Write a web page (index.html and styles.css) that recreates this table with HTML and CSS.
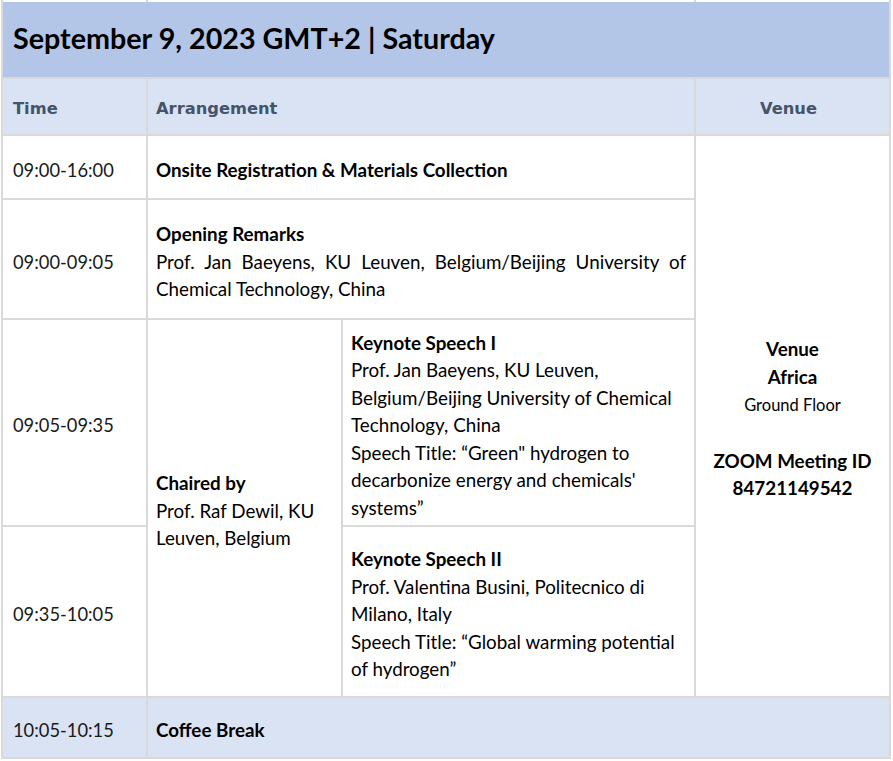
FILE: index.html
```html
<!DOCTYPE html>
<html lang="en">
<head>
<meta charset="utf-8">
<title>September 9, 2023 Schedule</title>
<link rel="stylesheet" href="styles.css">
</head>
<body>
<div class="cut"><span></span><span class="cut-wide"></span><span></span></div>
<div class="sched">
  <div class="title">September 9, 2023 GMT+2 | Saturday</div>

  <div class="hd">Time</div>
  <div class="hd span-arr">Arrangement</div>
  <div class="hd hd-venue">Venue</div>

  <div class="time">09:00-16:00</div>
  <div class="cell span-arr"><p><b>Onsite Registration &amp; Materials Collection</b></p></div>
  <div class="cell venue">
    <p><b>Venue</b><br><b>Africa</b><br><span class="small">Ground Floor</span><br><br><b>ZOOM Meeting ID</b><br><b>84721149542</b></p>
  </div>

  <div class="time">09:00-09:05</div>
  <div class="cell span-arr"><p class="just"><b>Opening Remarks</b><br>Prof. Jan Baeyens, KU Leuven, Belgium/Beijing University of Chemical Technology, China</p></div>

  <div class="time">09:05-09:35</div>
  <div class="cell chair"><p><b>Chaired by</b><br>Prof. Raf Dewil, KU<br>Leuven, Belgium</p></div>
  <div class="cell key"><p><b>Keynote Speech I</b><br>Prof. Jan Baeyens, KU Leuven,<br>Belgium/Beijing University of Chemical<br>Technology, China<br>Speech Title: “Green" hydrogen to<br>decarbonize energy and chemicals'<br>systems”</p></div>

  <div class="time">09:35-10:05</div>
  <div class="cell key"><p><b>Keynote Speech II</b><br>Prof. Valentina Busini, Politecnico di<br>Milano, Italy<br>Speech Title: “Global warming potential<br>of hydrogen”</p></div>

  <div class="time brk">10:05-10:15</div>
  <div class="cell brk span-rest"><p><b>Coffee Break</b></p></div>
</div>
</body>
</html>
```
FILE: styles.css
```css
html, body {
  margin: 0;
  padding: 0;
  background: #ffffff;
}

body {
  font-family: "Lato", "Liberation Sans", sans-serif;
  color: #000000;
}

.cut {
  display: grid;
  grid-template-columns: 143px 546px 193px;
  column-gap: 2px;
  height: 2px;
  padding: 0 2px;
  margin-left: 1px;
  width: 886px;
  background: #d9d9d9;
}

.cut span {
  background: #ffffff;
}

.sched {
  display: grid;
  grid-template-columns: 143px 193px 351px 193px;
  grid-template-rows: 75px 55px 62px 118px 205px 169px 59px;
  gap: 2px;
  padding: 0 2px 2px 2px;
  margin-left: 1px;
  width: 886px;
  background: #d9d9d9;
}

.sched > div {
  background: #ffffff;
  display: flex;
  flex-direction: column;
  justify-content: center;
  min-width: 0;
}

.sched p {
  margin: 0;
}

.title {
  grid-column: 1 / -1;
  background: #b4c6e7 !important;
  padding: 0 10px 4px 10px;
  font-weight: 700;
  font-size: 28.7px;
  color: #000000;
}

.hd {
  background: #dae3f3 !important;
  font-family: "DejaVu Sans", "Verdana", sans-serif;
  font-weight: 700;
  font-size: 16.3px;
  color: #44546a;
  padding: 4px 10px 0 10px;
}

.hd.span-arr {
  padding-left: 8px;
}

.hd-venue {
  align-items: center;
  padding-left: 0;
  padding-right: 8px;
}

.span-arr {
  grid-column: 2 / 4;
}

.span-rest {
  grid-column: 2 / 5;
}

.time {
  padding: 5px 10px 0 10px;
  font-size: 18.3px;
  color: #1a1a1a;
}

.cell {
  padding: 5px 8px 0 8px;
  font-size: 18.8px;
  line-height: 27.4px;
  white-space: nowrap;
}

.cell.span-arr {
  white-space: normal;
}

.just {
  text-align: justify;
}

.venue {
  grid-column: 4;
  grid-row: 3 / 7;
  text-align: center;
}

.venue .small {
  font-size: 16.5px;
}

.chair {
  grid-column: 2;
  grid-row: 5 / 7;
}

.key {
  grid-column: 3;
}

.brk {
  background: #dae3f3 !important;
}

b {
  font-weight: 700;
}
```
